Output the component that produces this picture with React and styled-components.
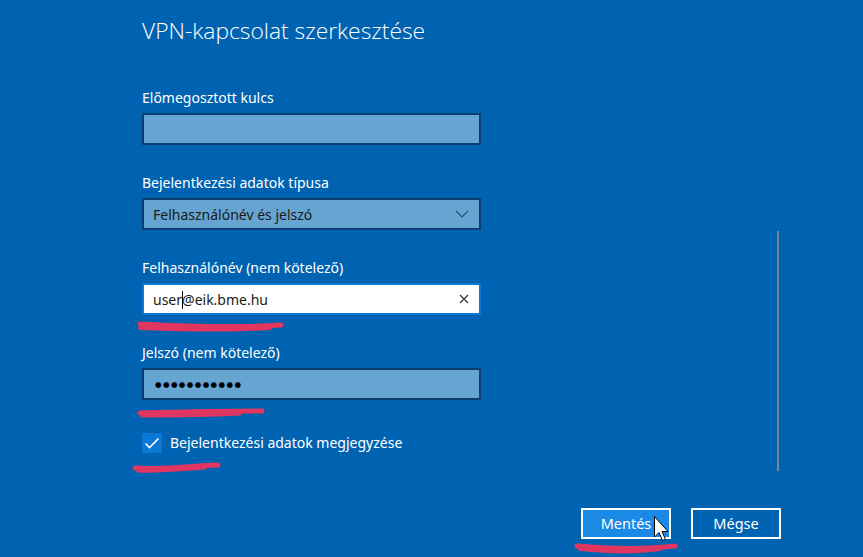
import React from "react";
import styled, { createGlobalStyle } from "styled-components";

const Global = createGlobalStyle`
  html, body { margin: 0; padding: 0; background: #0063b1; }
  body { font-family: "Noto Sans", "Open Sans", sans-serif; }
  #root { width: 863px; height: 557px; overflow: hidden; }
`;

const Page = styled.div`
  position: relative;
  width: 863px;
  height: 557px;
  background: #0063b1;
  color: #fff;
  display: flex;
  flex-direction: column;
  overflow: hidden;
`;

const Title = styled.h1`
  margin: 0;
  padding: 16px 0 0 142px;
  height: 54px;
  box-sizing: border-box;
  font-family: "Open Sans", "Noto Sans", sans-serif;
  font-weight: 300;
  font-size: 22.8px;
  line-height: 30px;
  color: #fff;
`;

const Scroller = styled.div`
  position: relative;
  flex: 1;
  padding: 34px 0 0 142px;
`;

const Form = styled.div`
  display: flex;
  flex-direction: column;
  width: 339px;
`;

const Field = styled.div`
  display: flex;
  flex-direction: column;
  margin-bottom: ${(p) => p.$gap}px;
`;

const Label = styled.label`
  font-size: 14px;
  line-height: 20px;
  height: 20px;
  margin-bottom: 5px;
  color: #fff;
`;

const Box = styled.div`
  box-sizing: border-box;
  height: 32px;
  display: flex;
  align-items: center;
  padding: 0 10px 0 9px;
  border: 2px solid ${(p) => (p.$focused ? "#0a78d4" : "#0c3f6e")};
  background: ${(p) => (p.$focused ? "#ffffff" : "#66a4d2")};
  color: #1a1a1a;
  font-size: 14px;
`;

const BoxText = styled.span`
  flex: 1;
  white-space: nowrap;
  position: relative;
`;

const Caret = styled.span`
  display: inline-block;
  width: 1px;
  height: 18px;
  background: #000;
  vertical-align: -4px;
  margin: 0 -1px 0 0;
`;

const Dots = styled.span`
  flex: 1;
  font-family: "DejaVu Sans", sans-serif;
  font-size: 7.5px;
  letter-spacing: 1.4px;
  color: #000;
  padding-left: 2px;
`;

const CheckRow = styled.div`
  display: flex;
  align-items: center;
  gap: 8px;
  margin-top: 5px;
`;

const CheckBox = styled.div`
  width: 20px;
  height: 20px;
  background: #0a78d4;
  display: flex;
  align-items: center;
  justify-content: center;
`;

const CheckLabel = styled.span`
  font-size: 14px;
  color: #fff;
  line-height: 20px;
`;

const ScrollThumb = styled.div`
  position: absolute;
  left: 777px;
  top: 177px;
  width: 2px;
  height: 240px;
  background: #7a8593;
`;

const Footer = styled.div`
  display: flex;
  justify-content: flex-end;
  gap: 20px;
  padding: 0 82px 18px 0;
`;

const Button = styled.button`
  box-sizing: border-box;
  width: 90px;
  height: 31px;
  border: 2px solid #fff;
  background: ${(p) => (p.$primary ? "#1a8ae6" : "transparent")};
  color: #fff;
  font-family: "Noto Sans", "Open Sans", sans-serif;
  font-size: 14.5px;
  padding: 0 0 1px;
  cursor: default;
`;

const Overlay = styled.svg`
  position: absolute;
  left: 0;
  top: 0;
  pointer-events: none;
`;

const Chevron = () => (
  <svg width="14" height="8" viewBox="0 0 14 8">
    <path d="M1 1 L7 7 L13 1" fill="none" stroke="#2a4e6e" strokeWidth="1.2" />
  </svg>
);

const ClearX = () => (
  <svg width="10" height="10" viewBox="0 0 10 10">
    <path d="M1 1 L9 9 M9 1 L1 9" stroke="#333" strokeWidth="1.2" />
  </svg>
);

export default function App() {
  return (
    <Page>
      <Global />
      <Title>VPN-kapcsolat szerkesztése</Title>
      <Scroller>
        <Form>
          <Field $gap={28}>
            <Label>Előmegosztott kulcs</Label>
            <Box />
          </Field>
          <Field $gap={28}>
            <Label>Bejelentkezési adatok típusa</Label>
            <Box>
              <BoxText>Felhasználónév és jelszó</BoxText>
              <Chevron />
            </Box>
          </Field>
          <Field $gap={28}>
            <Label>Felhasználónév (nem kötelező)</Label>
            <Box $focused>
              <BoxText>
                user<Caret />@eik.bme.hu
              </BoxText>
              <ClearX />
            </Box>
          </Field>
          <Field $gap={28}>
            <Label>Jelszó (nem kötelező)</Label>
            <Box>
              <Dots>●●●●●●●●●●●</Dots>
            </Box>
          </Field>
          <CheckRow>
            <CheckBox>
              <svg width="16" height="12" viewBox="0 0 16 12">
                <path d="M1.5 6.5 L5.5 10.5 L14.5 1.5" fill="none" stroke="#fff" strokeWidth="1.6" />
              </svg>
            </CheckBox>
            <CheckLabel>Bejelentkezési adatok megjegyzése</CheckLabel>
          </CheckRow>
        </Form>
        <ScrollThumb />
      </Scroller>
      <Footer>
        <Button $primary>Mentés</Button>
        <Button>Mégse</Button>
      </Footer>
      <Overlay width="863" height="557" viewBox="0 0 863 557">
        <g fill="none" stroke="#e0365f" strokeLinecap="round">
          <path d="M140 324 C180 326 240 328 281 325" strokeWidth="5" />
          <path d="M140 328 C190 330 240 330 270 328" strokeWidth="4" />
          <path d="M140 413 C180 412 230 411 262 411" strokeWidth="5" />
          <path d="M142 416 C180 416 220 415 240 414" strokeWidth="3" />
          <path d="M135 468 C160 470 190 466 218 465" strokeWidth="5" />
          <path d="M138 471 C160 472 190 469 205 468" strokeWidth="3" />
          <path d="M577 546 C600 548 640 550 675 546" strokeWidth="5" />
          <path d="M580 549 C610 552 640 552 660 549" strokeWidth="4" />
        </g>
        <path
          d="M654.5 516.5 L654.5 537 L659 532.5 L662.5 540.5 L665.5 539.5 L662 531.5 L668 531.5 Z"
          fill="#fff"
          stroke="#000"
          strokeWidth="1"
          strokeLinejoin="round"
        />
      </Overlay>
    </Page>
  );
}
